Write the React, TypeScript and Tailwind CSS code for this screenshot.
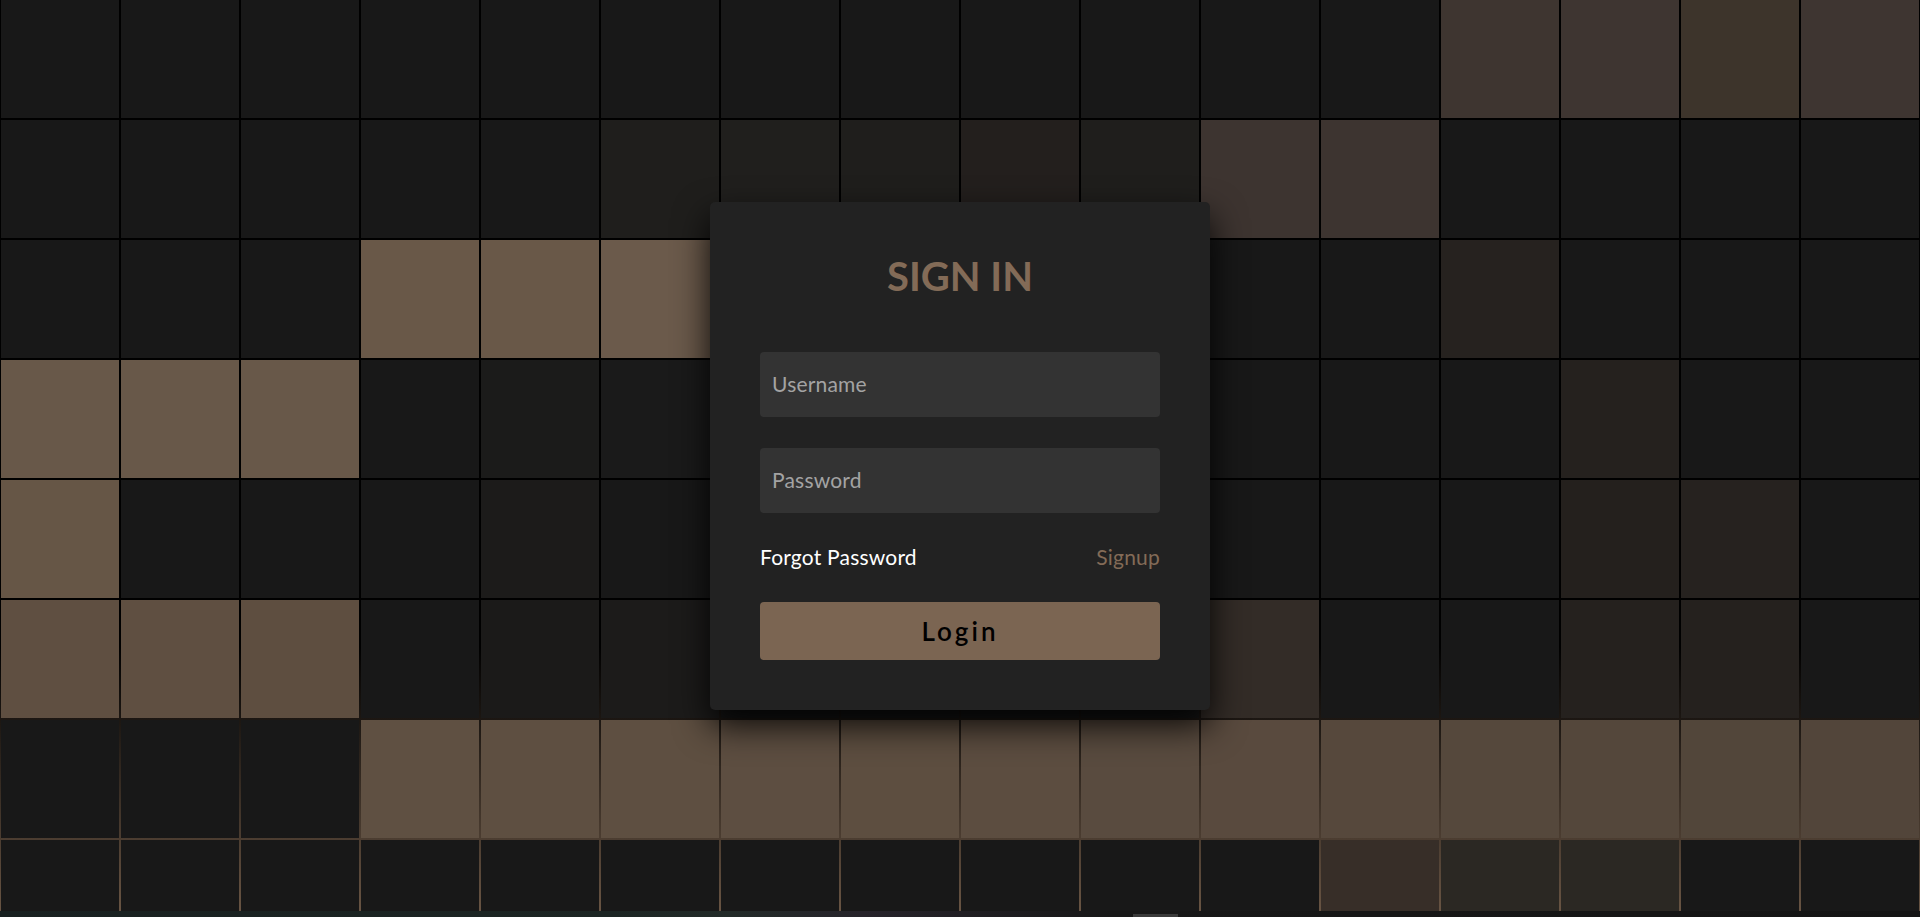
import React from "react";

const COLS = 16;
const ROWS = 8;

// cells that are still glowing from the hover trail
const lit: Record<string, string> = {
	"0-12": "bg-[#3e3530]",
	"0-13": "bg-[#3e3531]",
	"0-14": "bg-[#3d342b]",
	"0-15": "bg-[#3e3531]",
	"1-5": "bg-[#1f1e1c]",
	"1-6": "bg-[#201f1d]",
	"1-7": "bg-[#1f1e1c]",
	"1-8": "bg-[#231f1d]",
	"1-9": "bg-[#1f1e1c]",
	"1-10": "bg-[#3d3430]",
	"1-11": "bg-[#3d3430]",
	"2-3": "bg-[#695848]",
	"2-4": "bg-[#695848]",
	"2-5": "bg-[#6b5a4b]",
	"2-12": "bg-[#26221f]",
	"3-0": "bg-[#685849]",
	"3-1": "bg-[#685849]",
	"3-2": "bg-[#685849]",
	"3-4": "bg-[#1b1b1a]",
	"3-5": "bg-[#1a1a1a]",
	"3-13": "bg-[#25211e]",
	"4-0": "bg-[#665646]",
	"4-4": "bg-[#1c1b1a]",
	"4-13": "bg-[#24201d]",
	"4-14": "bg-[#26221f]",
	"5-0": "bg-[#5f4f41]",
	"5-1": "bg-[#5f4f41]",
	"5-2": "bg-[#5e4e40]",
	"5-4": "bg-[#1b1a19]",
	"5-5": "bg-[#1c1b1a]",
	"5-10": "bg-[#332c27]",
	"5-13": "bg-[#25211e]",
	"5-14": "bg-[#25211e]",
	"6-3": "bg-[#5f5042]",
	"6-4": "bg-[#5e4f41]",
	"6-5": "bg-[#5e4f41]",
	"6-6": "bg-[#5d4e41]",
	"6-7": "bg-[#5d4e40]",
	"6-8": "bg-[#5c4d40]",
	"6-9": "bg-[#594b3f]",
	"6-10": "bg-[#594a3e]",
	"6-11": "bg-[#56483c]",
	"6-12": "bg-[#55483c]",
	"6-13": "bg-[#54473b]",
	"6-14": "bg-[#52463a]",
	"6-15": "bg-[#52453a]",
	"7-11": "bg-[#372e28]",
	"7-12": "bg-[#2b2823]",
	"7-13": "bg-[#2b2823]",
};

function Cells() {
	const cells: React.ReactNode[] = [];
	for (let r = 0; r < ROWS; r++) {
		for (let c = 0; c < COLS; c++) {
			const key = `${r}-${c}`;
			cells.push(
				<span key={key} className={`block h-[118px] w-[118px] ${lit[key] ?? "bg-[#181818]"}`}/>
			);
		}
	}
	return <>{cells}</>;
}

function SignIn() {
	return (
		<div
			className="absolute left-1/2 top-[202px] z-10 flex w-[500px] -translate-x-1/2 flex-col rounded-[5px] bg-[#222222] px-[50px] pb-[50px] pt-[54px] shadow-[0_15px_35px_rgba(0,0,0,0.9)]">
			<h2 className="text-center text-[40px] font-bold leading-[40px] text-[#836b57]">SIGN IN</h2>

			<form className="mt-[56px] flex flex-col" onSubmit={(e) => e.preventDefault()}>
				<input
					type="text"
					placeholder="Username"
					className="h-[65px] w-full rounded-[4px] bg-[#333333] px-[12px] pb-[3px] text-[21px] tracking-[0.2px] text-white outline-none placeholder:text-[#a3a3a3]"
				/>
				<input
					type="password"
					placeholder="Password"
					className="mt-[31px] h-[65px] w-full rounded-[4px] bg-[#333333] px-[12px] pb-[3px] text-[21px] tracking-[0.2px] text-white outline-none placeholder:text-[#a3a3a3]"
				/>

				<div className="mt-[32px] flex h-[24px] items-center justify-between text-[21px] leading-[24px] tracking-[0.2px]">
					<a className="text-white">Forgot Password</a>
					<a className="text-[#836b57]">Signup</a>
				</div>

				<button
					type="submit"
					className="mt-[33px] h-[58px] w-full rounded-[4px] bg-[#7b6552] text-[26px] font-semibold tracking-[3px] text-black">
					Login
				</button>
			</form>
		</div>
	);
}

export default function App() {
	return (
		<div className="flex h-[917px] w-full flex-col overflow-hidden bg-[#161616] font-['Lato',sans-serif]">
			<section
				className="relative flex h-[911px] w-full shrink-0 flex-wrap content-start justify-center gap-[2px] overflow-hidden bg-[linear-gradient(#000000_71%,#685443_100%)]">
				<Cells/>
				<SignIn/>
			</section>

			<div
				className="flex h-[6px] w-full bg-[linear-gradient(90deg,#182020,#1c2523_32%,#222a28_38%,#26232a_45%,#171717_58%,#141414)]">
				<div className="ml-[1133px] mt-[3px] h-[3px] w-[45px] bg-[#3a3a3a]"/>
			</div>
		</div>
	);
}
